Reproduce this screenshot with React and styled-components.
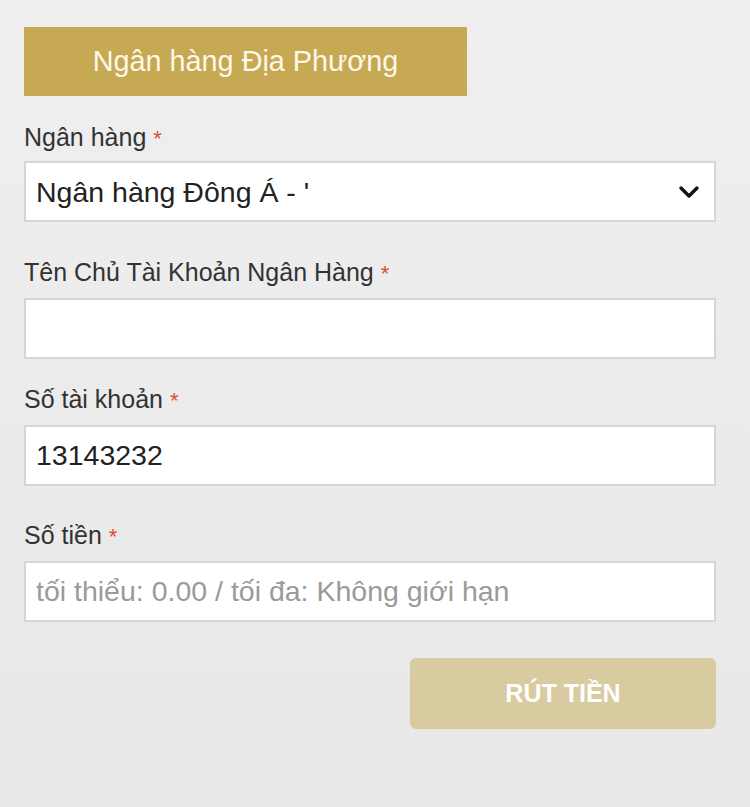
import React from 'react';
import styled, { createGlobalStyle } from 'styled-components';

const GlobalStyle = createGlobalStyle`
  html, body {
    margin: 0;
    padding: 0;
  }
  body {
    font-family: "Liberation Sans", Arial, sans-serif;
    background: linear-gradient(180deg, #efefef 0%, #e8e8e8 100%);
    min-height: 807px;
  }
`;

const Page = styled.div`
  width: 692px;
  padding: 27px 34px 0 24px;
  min-height: 780px;
`;

const TabTitle = styled.div`
  width: 443px;
  height: 69px;
  background: #c7a953;
  color: #fdf8ea;
  font-size: 28.8px;
  display: flex;
  align-items: center;
  justify-content: center;
`;

const Field = styled.div`
  margin-top: ${({ $top }) => $top}px;
`;

const Label = styled.div`
  font-size: 25px;
  line-height: 30px;
  height: 30px;
  color: #333;
  margin-bottom: ${({ $gap }) => $gap || 9}px;
`;

const Req = styled.span`
  color: #e0493c;
  font-size: 22px;
  line-height: 1;
`;

const SelectWrap = styled.div`
  position: relative;
`;

const Select = styled.select`
  appearance: none;
  display: block;
  width: 100%;
  height: 61px;
  box-sizing: border-box;
  border: 2px solid #d6d6d6;
  background: #fff;
  font-family: "Liberation Sans", Arial, sans-serif;
  font-size: 28.5px;
  color: #222;
  padding: 0 50px 0 10px;
  outline: none;
`;

const Chevron = styled.svg`
  position: absolute;
  right: 16px;
  top: 24px;
  pointer-events: none;
`;

const Input = styled.input`
  display: block;
  width: 100%;
  height: 61px;
  box-sizing: border-box;
  border: 2px solid #d6d6d6;
  background: #fff;
  font-family: "Liberation Sans", Arial, sans-serif;
  font-size: 28.5px;
  color: #222;
  padding: 0 10px;
  outline: none;

  &::placeholder {
    color: #9a9a9a;
  }
`;

const Actions = styled.div`
  display: flex;
  justify-content: flex-end;
  margin-top: 36px;
`;

const SubmitButton = styled.button`
  width: 306px;
  height: 71px;
  border: none;
  border-radius: 6px;
  background: #d9cba0;
  color: #fff;
  font-family: "Liberation Sans", Arial, sans-serif;
  font-weight: bold;
  font-size: 25px;
  cursor: not-allowed;
`;

export default function App() {
  return (
    <>
      <GlobalStyle />
      <Page>
        <TabTitle>Ngân hàng Địa Phương</TabTitle>

        <Field $top={26}>
          <Label>
            Ngân hàng <Req>*</Req>
          </Label>
          <SelectWrap>
            <Select defaultValue="dab">
              <option value="dab">Ngân hàng Đông Á - '</option>
            </Select>
            <Chevron width="22" height="14" viewBox="0 0 22 14">
              <polyline
                points="3,3 11,11 19,3"
                fill="none"
                stroke="#111"
                strokeWidth="3.4"
                strokeLinecap="round"
                strokeLinejoin="round"
              />
            </Chevron>
          </SelectWrap>
        </Field>

        <Field $top={35}>
          <Label $gap={11}>
            Tên Chủ Tài Khoản Ngân Hàng <Req>*</Req>
          </Label>
          <Input type="text" defaultValue="" />
        </Field>

        <Field $top={25}>
          <Label $gap={11}>
            Số tài khoản <Req>*</Req>
          </Label>
          <Input type="text" defaultValue="13143232" />
        </Field>

        <Field $top={34}>
          <Label $gap={11}>
            Số tiền <Req>*</Req>
          </Label>
          <Input type="text" placeholder="tối thiểu: 0.00 / tối đa: Không giới hạn" />
        </Field>

        <Actions>
          <SubmitButton disabled>RÚT TIỀN</SubmitButton>
        </Actions>
      </Page>
    </>
  );
}
